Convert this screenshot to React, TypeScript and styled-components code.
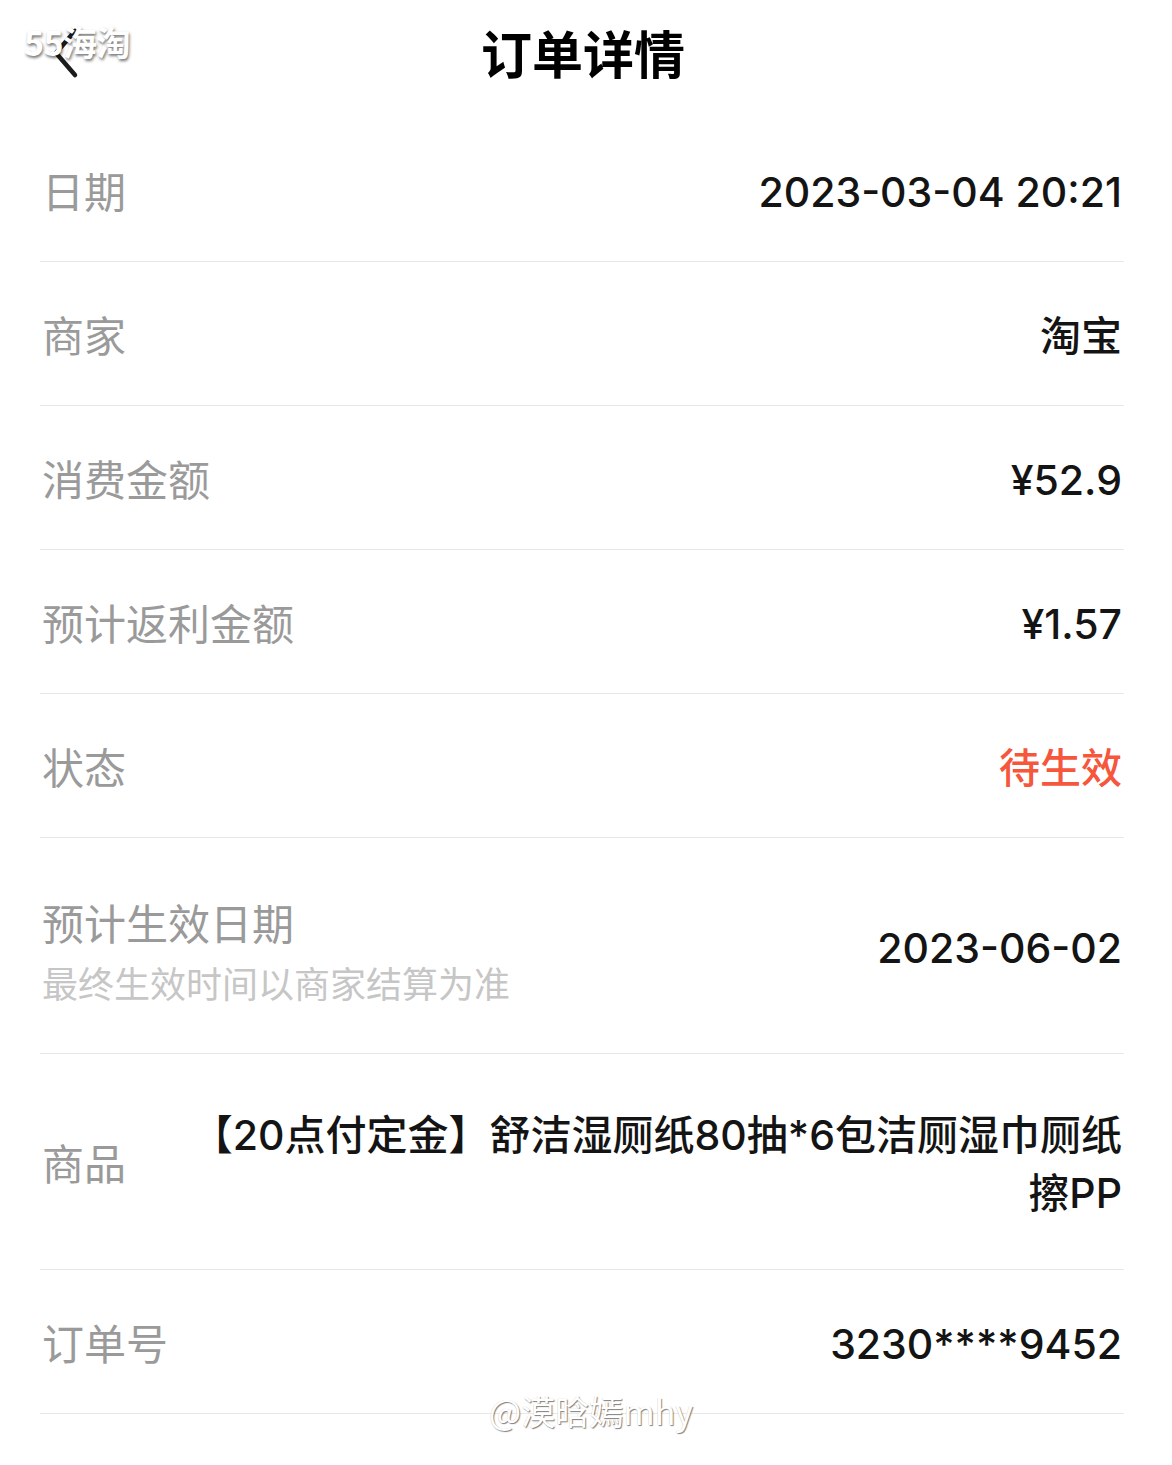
import React from 'react';
import styled, {createGlobalStyle} from "styled-components";

const GlobalStyle = createGlobalStyle`
    html, body {
        margin: 0;
        padding: 0;
        background: #ffffff;
    }
    body {
        font-family: "Noto Sans CJK SC", "Noto Sans", sans-serif;
        -webkit-font-smoothing: antialiased;
    }
`

type Row = {
    label: string;
    sub?: string;
    value: string;
    accent?: boolean;
    tall?: boolean;
}

const rows: Row[] = [
    {label: "日期", value: "2023-03-04 20:21"},
    {label: "商家", value: "淘宝"},
    {label: "消费金额", value: "¥52.9"},
    {label: "预计返利金额", value: "¥1.57"},
    {label: "状态", value: "待生效", accent: true},
    {label: "预计生效日期", sub: "最终生效时间以商家结算为准", value: "2023-06-02", tall: true},
    {label: "商品", value: "【20点付定金】舒洁湿厕纸80抽*6包洁厕湿巾厕纸擦PP", tall: true},
    {label: "订单号", value: "3230****9452"},
];

const App = () => {
    return (
        <Page>
            <GlobalStyle/>
            <Header>
                <BackButton>
                    <svg width="40" height="60" viewBox="0 0 40 60">
                        <path d="M27 10 L8 32 L27 54" fill="none" stroke="#1c1c1c" strokeWidth="4.5"
                              strokeLinecap="round" strokeLinejoin="round"/>
                    </svg>
                </BackButton>
                <Title>订单详情</Title>
                <SiteMark>55海淘</SiteMark>
            </Header>
            <List>
                {rows.map((row) => (
                    <Item key={row.label} $tall={row.tall}>
                        <LabelBox $withSub={!!row.sub}>
                            <Label>{row.label}</Label>
                            {row.sub && <Sub>{row.sub}</Sub>}
                        </LabelBox>
                        <Value $accent={row.accent}>{row.value}</Value>
                    </Item>
                ))}
            </List>
            <Watermark>@漠晗嫣mhy</Watermark>
        </Page>
    );
};

export default App;

const Page = styled.div`
    position: relative;
    width: 1172px;
    min-height: 1465px;
    background: #fff;
`
const Header = styled.header`
    position: relative;
    height: 118px;
    display: flex;
    justify-content: center;
    align-items: flex-start;
`
const BackButton = styled.div`
    position: absolute;
    left: 48px;
    top: 21px;
    width: 40px;
    height: 60px;
`
const Title = styled.h1`
    margin: 0 6px 0 0;
    padding-top: 19px;
    font-size: 51px;
    line-height: 66px;
    font-weight: 700;
    color: #000;
`
const SiteMark = styled.span`
    position: absolute;
    left: 24px;
    top: 20px;
    font-size: 34px;
    line-height: 44px;
    font-weight: 700;
    color: #fff;
    letter-spacing: -0.5px;
    text-shadow: 1px 2px 3px rgba(0, 0, 0, 0.55);
`
const List = styled.div`
    padding: 0 48px 0 40px;
`
const Item = styled.div<{ $tall?: boolean }>`
    display: flex;
    align-items: center;
    justify-content: space-between;
    gap: 60px;
    height: ${p => p.$tall ? 216 : 144}px;
    box-sizing: border-box;
    border-bottom: 1.5px solid #e8e8e8;
    padding: 0 2px;
`
const LabelBox = styled.div<{ $withSub?: boolean }>`
    display: flex;
    flex-direction: column;
    flex-shrink: 0;
    gap: 2px;
    padding-top: ${p => p.$withSub ? 12 : 0}px;
`
const Label = styled.span`
    font-size: 42px;
    line-height: 58px;
    color: #9a9a9a;
`
const Sub = styled.span`
    font-size: 36px;
    line-height: 58px;
    color: #c6c6c6;
`
const Value = styled.span<{ $accent?: boolean }>`
    max-width: 940px;
    padding-top: 4px;
    text-align: right;
    font-family: Inter, "Noto Sans CJK SC", sans-serif;
    font-size: 41px;
    line-height: 58px;
    font-weight: 500;
    color: ${p => p.$accent ? "#f5563c" : "#141414"};
`
const Watermark = styled.span`
    position: absolute;
    left: 489px;
    top: 1388px;
    font-size: 34px;
    line-height: 46px;
    color: #fff;
    text-shadow: 1px 1px 1px rgba(0, 0, 0, 0.5), -0.5px -0.5px 0 rgba(0, 0, 0, 0.15);
`
